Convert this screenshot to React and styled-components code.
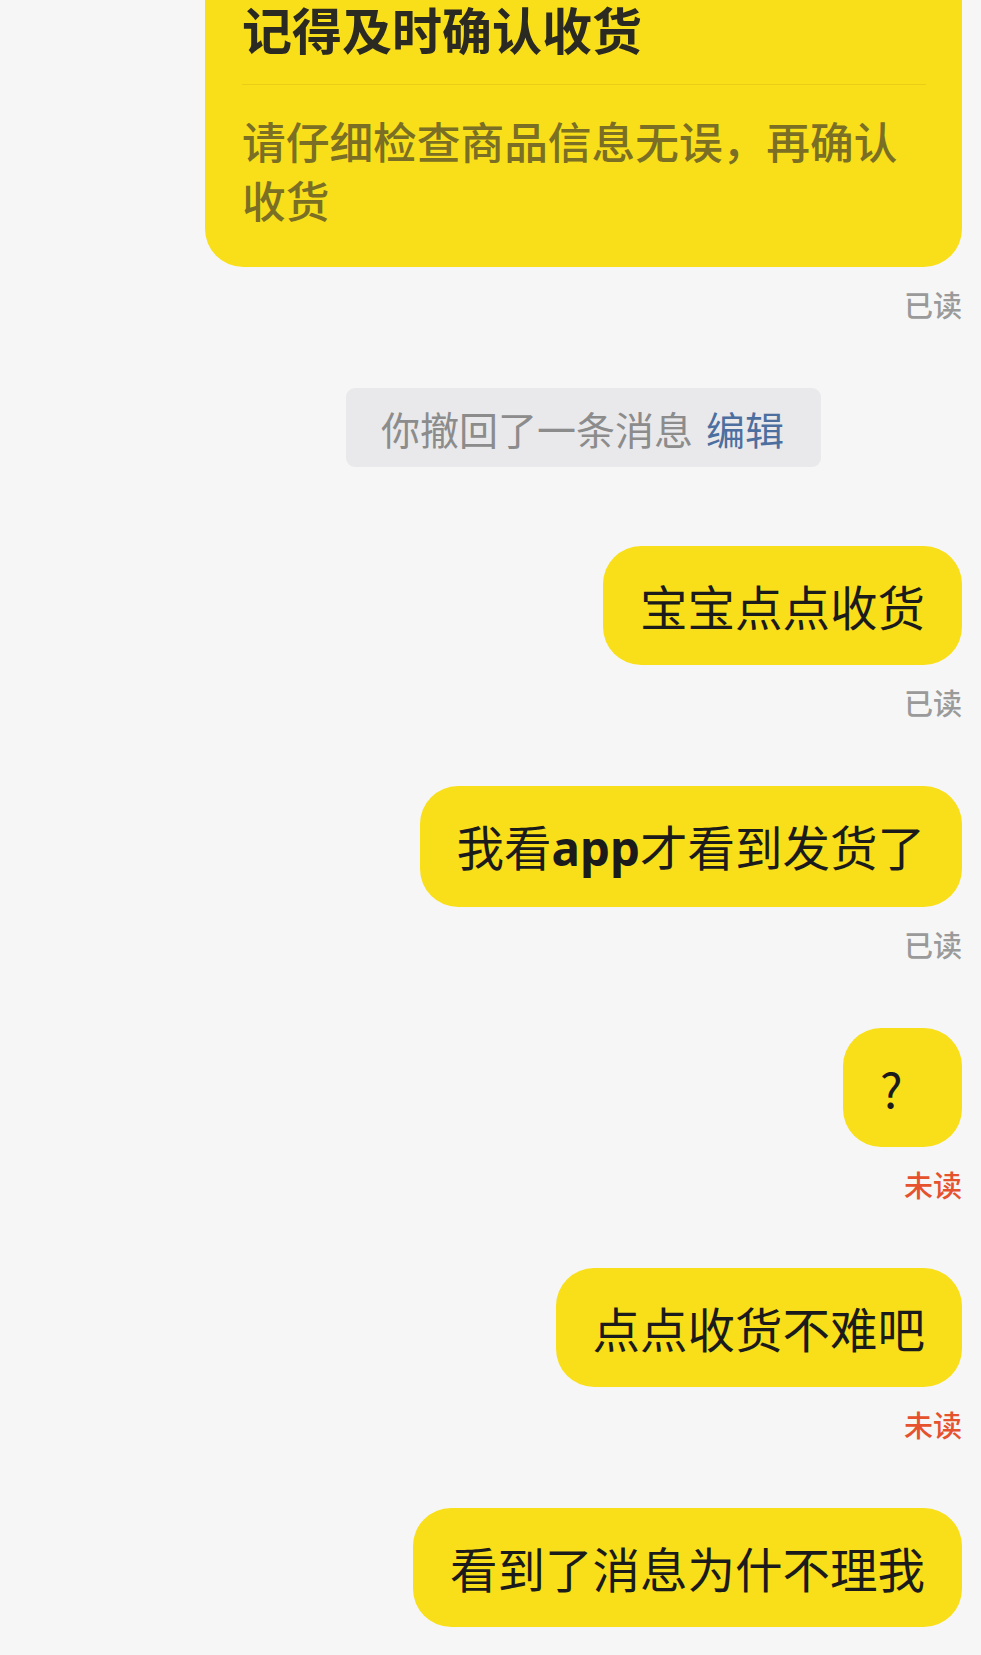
import React from "react";
import styled, { createGlobalStyle } from "styled-components";

const GlobalStyle = createGlobalStyle`
  html, body {
    margin: 0;
    padding: 0;
    background: #f6f6f6;
  }
  body {
    font-family: "Noto Sans CJK SC", "Noto Sans", sans-serif;
    overflow: hidden;
  }
`;

const Screen = styled.div`
  width: 981px;
  height: 1655px;
  overflow: hidden;
  background: #f6f6f6;
`;

const Thread = styled.div`
  display: flex;
  flex-direction: column;
  align-items: flex-end;
  padding: 0 19px 0 205px;
  margin-top: -40px;
`;

const Group = styled.div`
  display: flex;
  flex-direction: column;
  align-items: flex-end;
  margin-bottom: 66px;
  max-width: 757px;
`;

const Card = styled.div`
  width: 757px;
  box-sizing: border-box;
  background: #f8df19;
  border-radius: 38px;
  padding: 42px 36px 38px 37px;
`;

const CardTitle = styled.div`
  font-size: 50px;
  line-height: 52px;
  font-weight: 700;
  color: #2a2a22;
`;

const Divider = styled.div`
  height: 1px;
  background: rgba(120, 100, 0, 0.12);
  margin: 30px 0 26px;
`;

const CardBody = styled.div`
  font-size: 43.7px;
  line-height: 59px;
  font-weight: 500;
  color: #7a6f24;
`;

const Bubble = styled.div`
  box-sizing: border-box;
  min-width: 119px;
  background: #f8df19;
  border-radius: 38px;
  padding: 26px 37px;
  font-size: 47.5px;
  line-height: 67px;
  color: #1b1b1b;
  white-space: nowrap;
`;

const Latin = styled.span`
  font-family: "Noto Sans", sans-serif;
  font-weight: 700;
`;

const Status = styled.div`
  margin-top: 19px;
  font-size: 29px;
  line-height: 36px;
  font-weight: 500;
  color: ${(p) => (p.$unread ? "#e5522d" : "#9a9a9a")};
`;

const Notice = styled.div`
  align-self: center;
  margin-bottom: 79px;
  background: #e9e9eb;
  border-radius: 9px;
  padding: 0 37px 0 35px;
  height: 79px;
  display: flex;
  align-items: center;
  font-size: 39px;
  color: #8c8c8c;
  white-space: nowrap;
`;

const NoticeLink = styled.span`
  color: #4d6f9f;
  margin-left: 13px;
`;

const messages = [
  { id: 1, text: "宝宝点点收货", read: true },
  {
    id: 2,
    text: (
      <>
        我看<Latin>app</Latin>才看到发货了
      </>
    ),
    read: true,
  },
  { id: 3, text: "?", read: false },
  { id: 4, text: "点点收货不难吧", read: false },
  { id: 5, text: "看到了消息为什不理我", read: null },
];

const App = () => {
  return (
    <Screen>
      <GlobalStyle />
      <Thread>
        <Group>
          <Card>
            <CardTitle>记得及时确认收货</CardTitle>
            <Divider />
            <CardBody>请仔细检查商品信息无误，再确认收货</CardBody>
          </Card>
          <Status>已读</Status>
        </Group>

        <Notice>
          你撤回了一条消息<NoticeLink>编辑</NoticeLink>
        </Notice>

        {messages.map((m) => (
          <Group key={m.id}>
            <Bubble>{m.text}</Bubble>
            {m.read !== null && (
              <Status $unread={!m.read}>{m.read ? "已读" : "未读"}</Status>
            )}
          </Group>
        ))}
      </Thread>
    </Screen>
  );
};

export default App;
